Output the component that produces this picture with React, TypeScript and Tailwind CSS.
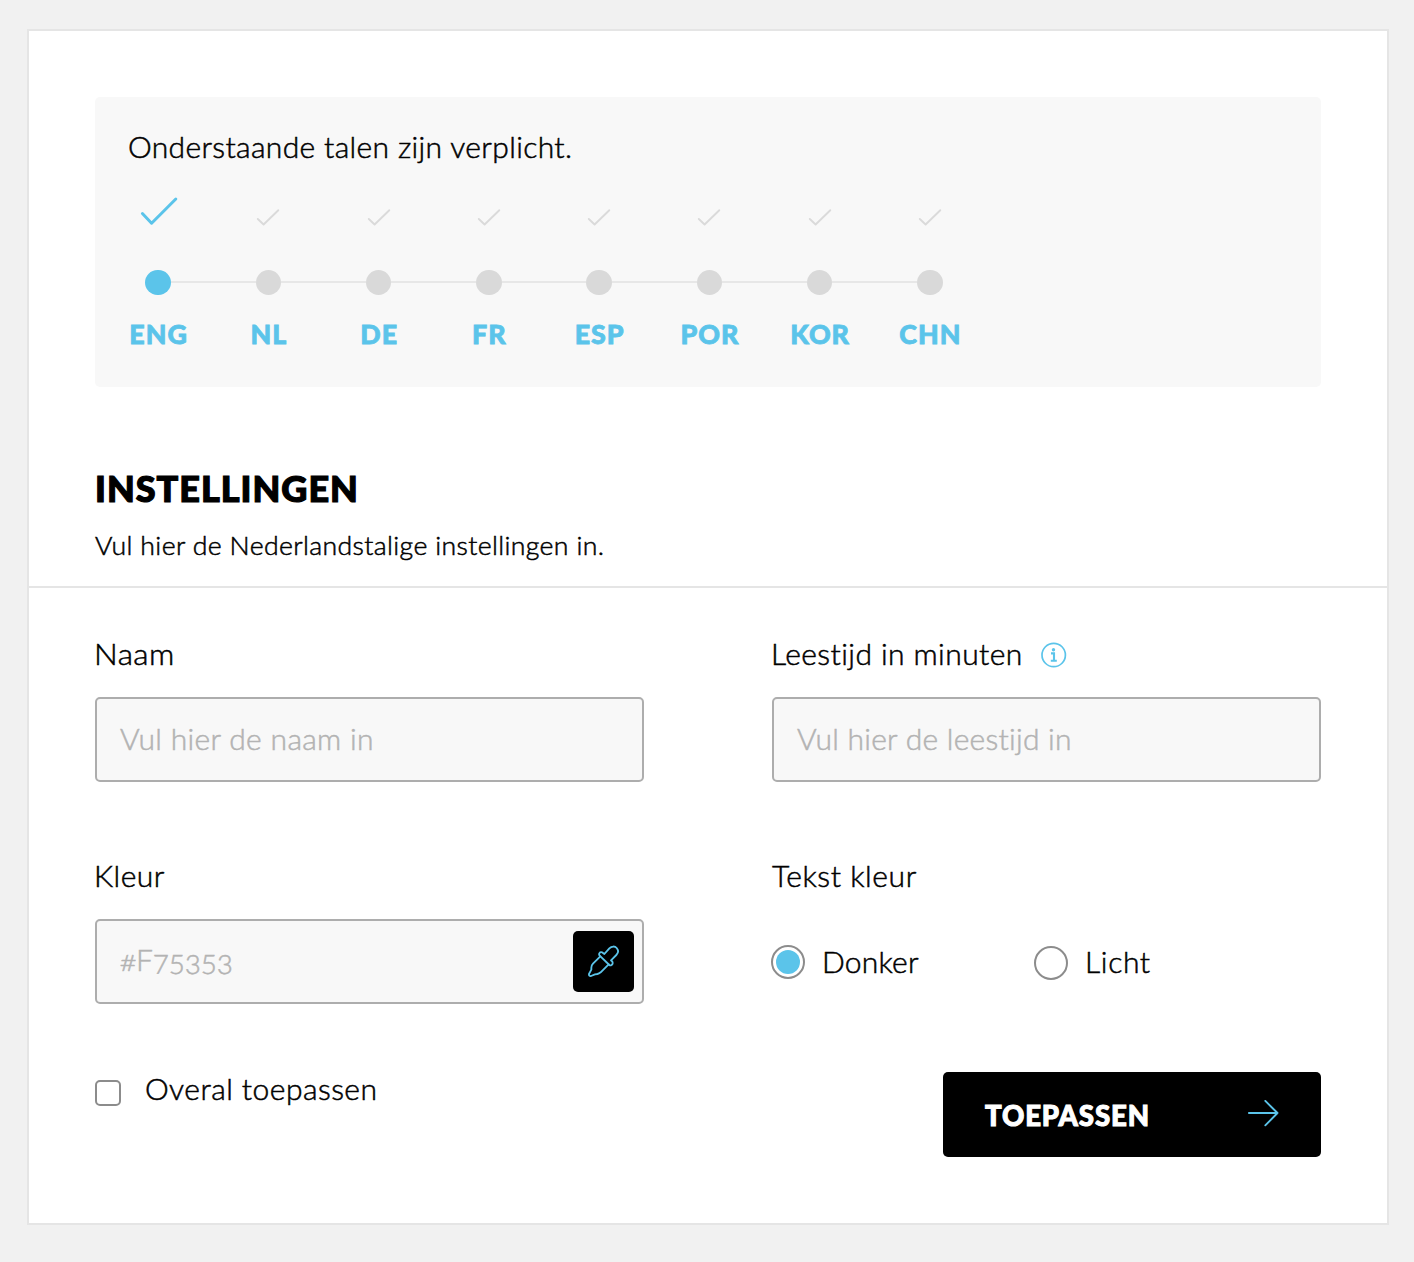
import type { ReactNode } from 'react';

const languages = ['ENG', 'NL', 'DE', 'FR', 'ESP', 'POR', 'KOR', 'CHN'];

function Copy({ children, className = 'scale-x-105 tracking-[0.3px]' }: { children: ReactNode; className?: string }) {
  return (
    <span
      className={`inline-block origin-left whitespace-nowrap text-[28.6px] leading-9 font-light [-webkit-text-stroke:0.5px_currentColor] ${className}`}
    >
      {children}
    </span>
  );
}

function Check({ active }: { active: boolean }) {
  return active ? (
    <svg width="40" height="32" viewBox="0 0 40 32" fill="none" stroke="#5bc4ea" strokeWidth="3" strokeLinecap="round" strokeLinejoin="round">
      <path d="M4.4 18.5 13.6 28.2 37.8 4" />
    </svg>
  ) : (
    <svg width="40" height="32" viewBox="0 0 40 32" fill="none" stroke="#dadada" strokeWidth="1.9" strokeLinecap="round" strokeLinejoin="round">
      <path d="M9.8 24 15.6 29.5 30.3 15.2" />
    </svg>
  );
}

function Steps() {
  return (
    <div className="mt-[30px] ml-2 flex">
      {languages.map((lang, i) => (
        <div key={lang} className="flex w-[110.25px] flex-col items-center">
          <Check active={i === 0} />
          <div className="mt-[42.5px] flex w-full items-center">
            <div className={i === 0 ? 'h-[2px] flex-1' : 'h-[2px] flex-1 bg-[#e7e7e7]'} />
            <div className={`size-[25.5px] rounded-full ${i === 0 ? 'bg-[#5bc4ea]' : 'bg-[#d9d9d9]'}`} />
            <div className={i === languages.length - 1 ? 'h-[2px] flex-1' : 'h-[2px] flex-1 bg-[#e7e7e7]'} />
          </div>
          <div className="mt-[21px] pl-px text-[26.8px] leading-9 font-black tracking-[1px] text-[#5bc4ea] [-webkit-text-stroke:0.8px_currentColor]">
            {lang}
          </div>
        </div>
      ))}
    </div>
  );
}

function InfoIcon() {
  return (
    <svg className="relative top-px" width="26" height="26" viewBox="0 0 26 26" fill="none" stroke="#5bc4ea">
      <circle cx="12.7" cy="13" r="11.7" strokeWidth="1.7" />
      <circle cx="12.5" cy="7.8" r="1.7" fill="#5bc4ea" stroke="none" />
      <path d="M10 11.4h3v7.2M9.8 18.8h6" strokeWidth="2.1" />
    </svg>
  );
}

function PipetteIcon() {
  return (
    <svg width="32" height="32" viewBox="69 63 96 96" fill="none" stroke="#5bc4ea" strokeWidth="5.5" strokeLinecap="round" strokeLinejoin="round">
      <path d="M104 95C100 90 104 83 111 85L118 90 133 73C140 66 150 66 155 72C161 79 160 87 154 93L138 109C145 113 145 122 138 124Q135 125 133 123Z" />
      <path d="M106 97 84 119Q79 124 79 131V137L72 150Q71 157 78 156L90 151 97 150Q102 149 107 145L131 121" />
    </svg>
  );
}

const field = 'mt-[25px] flex h-[85px] w-[549px] items-center rounded-[5px] border-2 border-[#adadad] bg-[#f8f8f8] pb-px pl-[23px] text-[#b3b3b3]';

export default function App() {
  return (
    <div className="h-[1262px] w-[1414px] bg-[#f1f1f1] pt-[29px] pl-[27px] font-['Lato',sans-serif] text-black">
      <main className="h-[1196px] w-[1362px] border-2 border-[#e5e5e5] bg-white">
        <section className="mt-[66px] ml-[66px] h-[290px] w-[1226px] rounded-[5px] bg-[#f8f8f8] pt-8">
          <div className="flex pl-[33px]">
            <Copy className="scale-x-105 tracking-[0.33px]">Onderstaande talen zijn verplicht.</Copy>
          </div>
          <Steps />
        </section>

        <header className="mt-[79px] flex h-[120px] flex-col items-start pl-[66px]">
          <h1 className="text-[36px] leading-[44px] font-black tracking-[1px] [-webkit-text-stroke:1.2px_currentColor]">INSTELLINGEN</h1>
          <p className="mt-[17px] origin-left scale-x-105 text-[25.4px] leading-9 font-light tracking-[0.34px] whitespace-nowrap [-webkit-text-stroke:0.5px_currentColor]">
            Vul hier de Nederlandstalige instellingen in.
          </p>
        </header>
        <hr className="border-t-2 border-[#e5e5e5]" />

        <form className="pt-12 pl-[66px]">
          <div className="grid w-[1226px] grid-cols-2">
            <div>
              <div className="-ml-px flex"><Copy className="scale-x-110 tracking-[0.4px]">Naam</Copy></div>
              <div className={field}><Copy>Vul hier de naam in</Copy></div>
            </div>
            <div className="justify-self-end">
              <div className="flex h-9 w-[549px] items-center justify-between pr-[254px]">
                <div className="-ml-px flex"><Copy className="scale-x-105 tracking-[0.4px]">Leestijd in minuten</Copy></div>
                <InfoIcon />
              </div>
              <div className={field}><Copy className="scale-x-105 tracking-[0.24px]">Vul hier de leestijd in</Copy></div>
            </div>
          </div>

          <div className="mt-[76px] grid w-[1226px] grid-cols-2">
            <div>
              <div className="-ml-px flex"><Copy className="scale-x-105 tracking-[0.45px]">Kleur</Copy></div>
              <div className={`${field} justify-between pr-2`}>
                <Copy className="relative -top-px scale-x-105 tracking-[-0.2px] oldstyle-nums">#F75353</Copy>
                <div className="flex size-[61px] items-center justify-center rounded-[5px] bg-black">
                  <PipetteIcon />
                </div>
              </div>
            </div>
            <div className="w-[549px] justify-self-end">
              <div className="flex"><Copy className="scale-x-105 tracking-[0.55px]">Tekst kleur</Copy></div>
              <div className="mt-[49px] -ml-px flex items-center">
                <div className="flex w-[263px] items-center">
                  <span className="flex size-[34px] items-center justify-center rounded-full border-2 border-[#8c8c8c] bg-white">
                    <span className="size-6 rounded-full bg-[#5bc4ea]" />
                  </span>
                  <span className="ml-[17px] flex"><Copy className="scale-x-105 tracking-[0.2px]">Donker</Copy></span>
                </div>
                <div className="flex items-center">
                  <span className="mt-[3px] size-[34px] rounded-full border-2 border-[#8c8c8c] bg-white" />
                  <span className="ml-[17px] flex"><Copy className="scale-x-105 tracking-[0.6px]">Licht</Copy></span>
                </div>
              </div>
            </div>
          </div>

          <div className="mt-[68px] flex w-[1226px] items-start justify-between">
            <div className="flex items-start">
              <span className="mt-2 size-[26px] rounded-[5px] border-2 border-[#8c8c8c] bg-white" />
              <span className="-mt-px ml-[24px] flex"><Copy className="scale-x-105 tracking-[0.44px]">Overal toepassen</Copy></span>
            </div>
            <div className="flex h-[85px] w-[378px] items-center justify-between rounded-[5px] bg-black pr-[42px] pl-[42px]">
              <span className="relative top-px text-[27.6px] leading-9 font-black tracking-[0.85px] text-white [-webkit-text-stroke:1px_currentColor]">TOEPASSEN</span>
              <svg className="relative -top-px" width="32" height="28" viewBox="0 0 32 28" fill="none" stroke="#5bc4ea" strokeWidth="1.9" strokeLinecap="round" strokeLinejoin="round">
                <path d="M1.9 13H30.5M18.3 0.9 30.5 13 18.3 25.3" />
              </svg>
            </div>
          </div>
        </form>
      </main>
    </div>
  );
}
